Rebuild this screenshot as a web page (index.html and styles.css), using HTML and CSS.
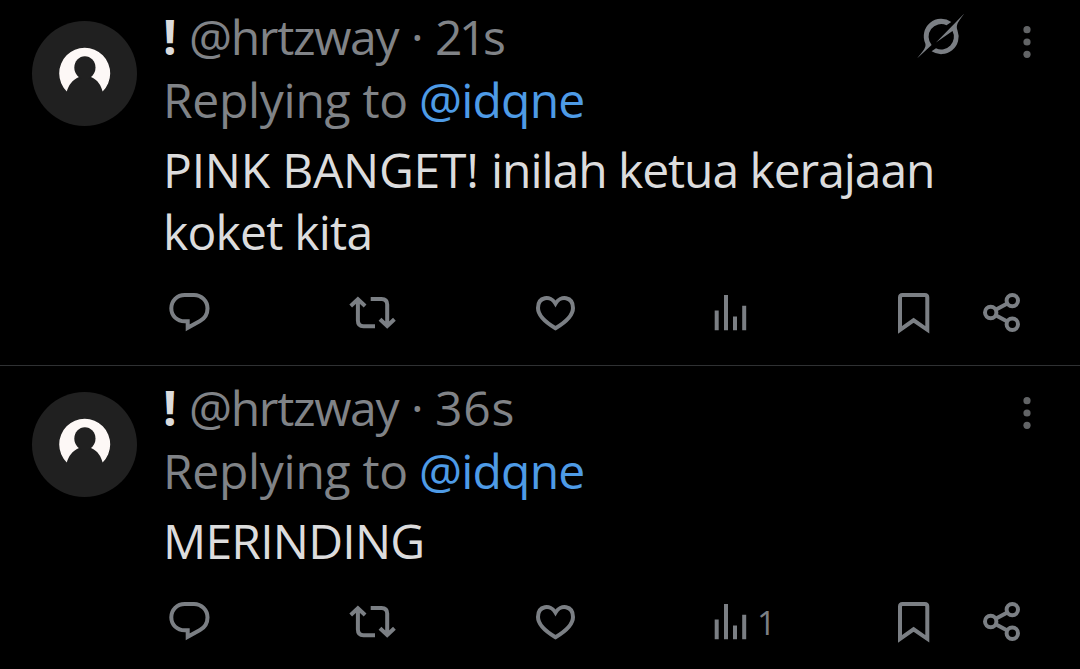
FILE: index.html
```html
<!DOCTYPE html>
<html lang="id">
<head>
    <meta charset="UTF-8">
    <meta name="viewport" content="width=device-width, initial-scale=1.0">
    <title>Replies</title>
    <link rel="stylesheet" href="styles.css">
</head>
<body>
    <!-- Shared icons -->
    <svg class="sprite">
        <symbol id="avatar" viewBox="0 0 105 105">
            <path fill="#fdf8f6" d="M34.8 70.5A25.5 25.5 0 1 1 70.6 70.5C69 64.5 66 59 59 56H47C40 59 36.500 64.5 34.800 70.500z"/>
            <ellipse cx="52.900" cy="46.600" rx="10.600" ry="11.400" fill="#202020"/>
        </symbol>
        <symbol id="grok" viewBox="0 0 48 48">
            <path fill="currentColor" d="M34.3 9A17.5 17.5 0 0 0 8.300 30.500C9.300 34 7 37 0 45.500L14.600 31.900A12.600 12.600 0 0 1 29.500 12.300z"/>
            <path fill="currentColor" d="M47.300 .5L19 29.500L35.500 18A12.600 12.600 0 0 1 19 35.200L14.600 38.300A17.500 17.500 0 0 0 40.500 17.400C38.500 12 41 9 47.300 .5z"/>
        </symbol>
        <symbol id="more" viewBox="0 0 20 40">
            <circle cx="10" cy="7.700" r="3.600"/>
            <circle cx="10" cy="20" r="3.600"/>
            <circle cx="10" cy="32.300" r="3.600"/>
        </symbol>
        <symbol id="reply" viewBox="0 0 48 44">
            <path d="M18.800 5H28A13.500 13.500 0 0 1 41.500 18.500C41.500 24 38.500 28.500 34 31L21.700 37.800V31.300H18.800C11 31.300 5.300 25.800 5.300 18.300C5.300 10.800 11 5 18.800 5z"/>
        </symbol>
        <symbol id="repost" viewBox="0 0 48 44">
            <path d="M1.700 16L8.900 9.300L16.100 16M8.900 10V30.500Q8.900 36.200 14.500 36.200H26M21.700 8.900H32.500Q38.200 8.900 38.200 14.600V36M31 29.300L38.200 36L45.400 29.300"/>
        </symbol>
        <symbol id="like" viewBox="0 0 48 44">
            <path d="M23.500 13.500C18.500 5 6 6.500 6 18C6 25.500 13 32 23.500 38.200C34 32 41 25.500 41 18C41 6.500 28.500 5 23.500 13.500z"/>
        </symbol>
        <symbol id="views" viewBox="0 0 48 44">
            <path d="M9.700 20.500V40.300M19 5V40.300M28 26.500V40.300M37.200 15.800V40.300"/>
        </symbol>
        <symbol id="bookmark" viewBox="0 0 48 44">
            <path d="M10 39.800V7.500Q10 5 12.500 5H34.800Q37.300 5 37.300 7.500V39.800L23.600 30.300z"/>
        </symbol>
        <symbol id="share" viewBox="0 0 48 44">
            <circle cx="12.700" cy="22.500" r="5.700"/>
            <circle cx="34.300" cy="10.600" r="5.700"/>
            <circle cx="34.300" cy="34.300" r="5.700"/>
            <path d="M17.700 19.700L29.300 13.400M17.700 25.300L29.300 31.500"/>
        </symbol>
    </svg>

    <div class="feed">
        <div class="tweet">
            <svg class="avatar"><use href="#avatar"/></svg>
            <div class="content">
                <div class="header">
                    <span class="name">!</span>
                    <span class="handle">@hrtzway</span>
                    <span class="dot">·</span>
                    <span class="time narrow">21s</span>
                    <svg class="grok"><use href="#grok"/></svg>
                    <svg class="more"><use href="#more"/></svg>
                </div>
                <div class="replying"><span class="label">Replying to</span> <a class="mention">@idqne</a></div>
                <p class="text"><span class="caps">PINK BANGET! </span><span class="tight">inilah ketua kerajaan</span><br>koket kita</p>
                <div class="actions">
                    <div class="action"><svg><use href="#reply"/></svg></div>
                    <div class="action"><svg><use href="#repost"/></svg></div>
                    <div class="action"><svg><use href="#like"/></svg></div>
                    <div class="action"><svg><use href="#views"/></svg></div>
                    <div class="action"><svg><use href="#bookmark"/></svg></div>
                    <div class="action"><svg><use href="#share"/></svg></div>
                </div>
            </div>
        </div>

        <div class="tweet">
            <svg class="avatar"><use href="#avatar"/></svg>
            <div class="content">
                <div class="header">
                    <span class="name">!</span>
                    <span class="handle">@hrtzway</span>
                    <span class="dot">·</span>
                    <span class="time">36s</span>
                    <svg class="more"><use href="#more"/></svg>
                </div>
                <div class="replying"><span class="label">Replying to</span> <a class="mention">@idqne</a></div>
                <p class="text">MERINDING</p>
                <div class="actions">
                    <div class="action"><svg><use href="#reply"/></svg></div>
                    <div class="action"><svg><use href="#repost"/></svg></div>
                    <div class="action"><svg><use href="#like"/></svg></div>
                    <div class="action"><svg><use href="#views"/></svg><span class="count">1</span></div>
                    <div class="action"><svg><use href="#bookmark"/></svg></div>
                    <div class="action"><svg><use href="#share"/></svg></div>
                </div>
            </div>
        </div>
    </div>
</body>
</html>
```
FILE: styles.css
```css
body {
    margin: 0;
    background: #000;
    color: #dcdcdd;
    font-family: "Open Sans", "Noto Sans", sans-serif;
    font-size: 48px;
    line-height: 62px;
    overflow: hidden;
}

.sprite {
    display: none;
}

/* Tweets */
.feed {
    margin-top: -5px;
    display: flow-root;
}

.tweet {
    display: flex;
    gap: 26px;
    padding: 11px 43px 31px 32px;
    border-bottom: 1px solid #2f3133;
}

.tweet:last-child {
    border-bottom: none;
}

.avatar {
    flex: none;
    width: 105px;
    height: 105px;
    margin-top: 15px;
    border-radius: 50%;
    background: #202020;
}

.content {
    flex: 1;
    min-width: 0;
    white-space: nowrap;
}

/* Name, handle and time */
.header {
    display: flex;
    height: 62px;
    color: #808387;
}

.name {
    width: 26px;
    color: #dcdcdd;
    font-weight: 700;
}

.handle {
    width: 222px;
    letter-spacing: -1.3px;
}

.dot {
    width: 24px;
}

.time {
    letter-spacing: 0.8px;
}

.time.narrow {
    letter-spacing: -3.5px;
}

.grok {
    width: 48px;
    height: 48px;
    margin: 7px 52px 0 auto;
    color: #7b7f84;
}

.more {
    width: 20px;
    height: 40px;
    margin: 16px 0 0 auto;
    fill: #626466;
}

.grok + .more {
    margin-left: 0;
}

.replying {
    display: flex;
    height: 63px;
    line-height: 64px;
    color: #808387;
}

.label {
    width: 256px;
    letter-spacing: -0.3px;
}

.mention {
    color: #4e9be6;
    letter-spacing: -0.8px;
}

.text {
    margin: 8px 0 0;
    letter-spacing: -0.76px;
}

.caps {
    letter-spacing: -0.23px;
}

.tight {
    letter-spacing: -1.05px;
}

/* Action buttons */
.actions {
    display: grid;
    grid-template-columns: 183px 183px 175px 183px 88px 48px;
    margin: 27px 0 0 3px;
}

.action {
    display: flex;
    height: 44px;
}

.action svg {
    flex: none;
    width: 48px;
    height: 44px;
    fill: none;
    stroke: #7b7f84;
    stroke-width: 4;
}

.count {
    margin-left: 2px;
    color: #7b7f84;
    font-size: 33px;
    line-height: 47px;
}
```
